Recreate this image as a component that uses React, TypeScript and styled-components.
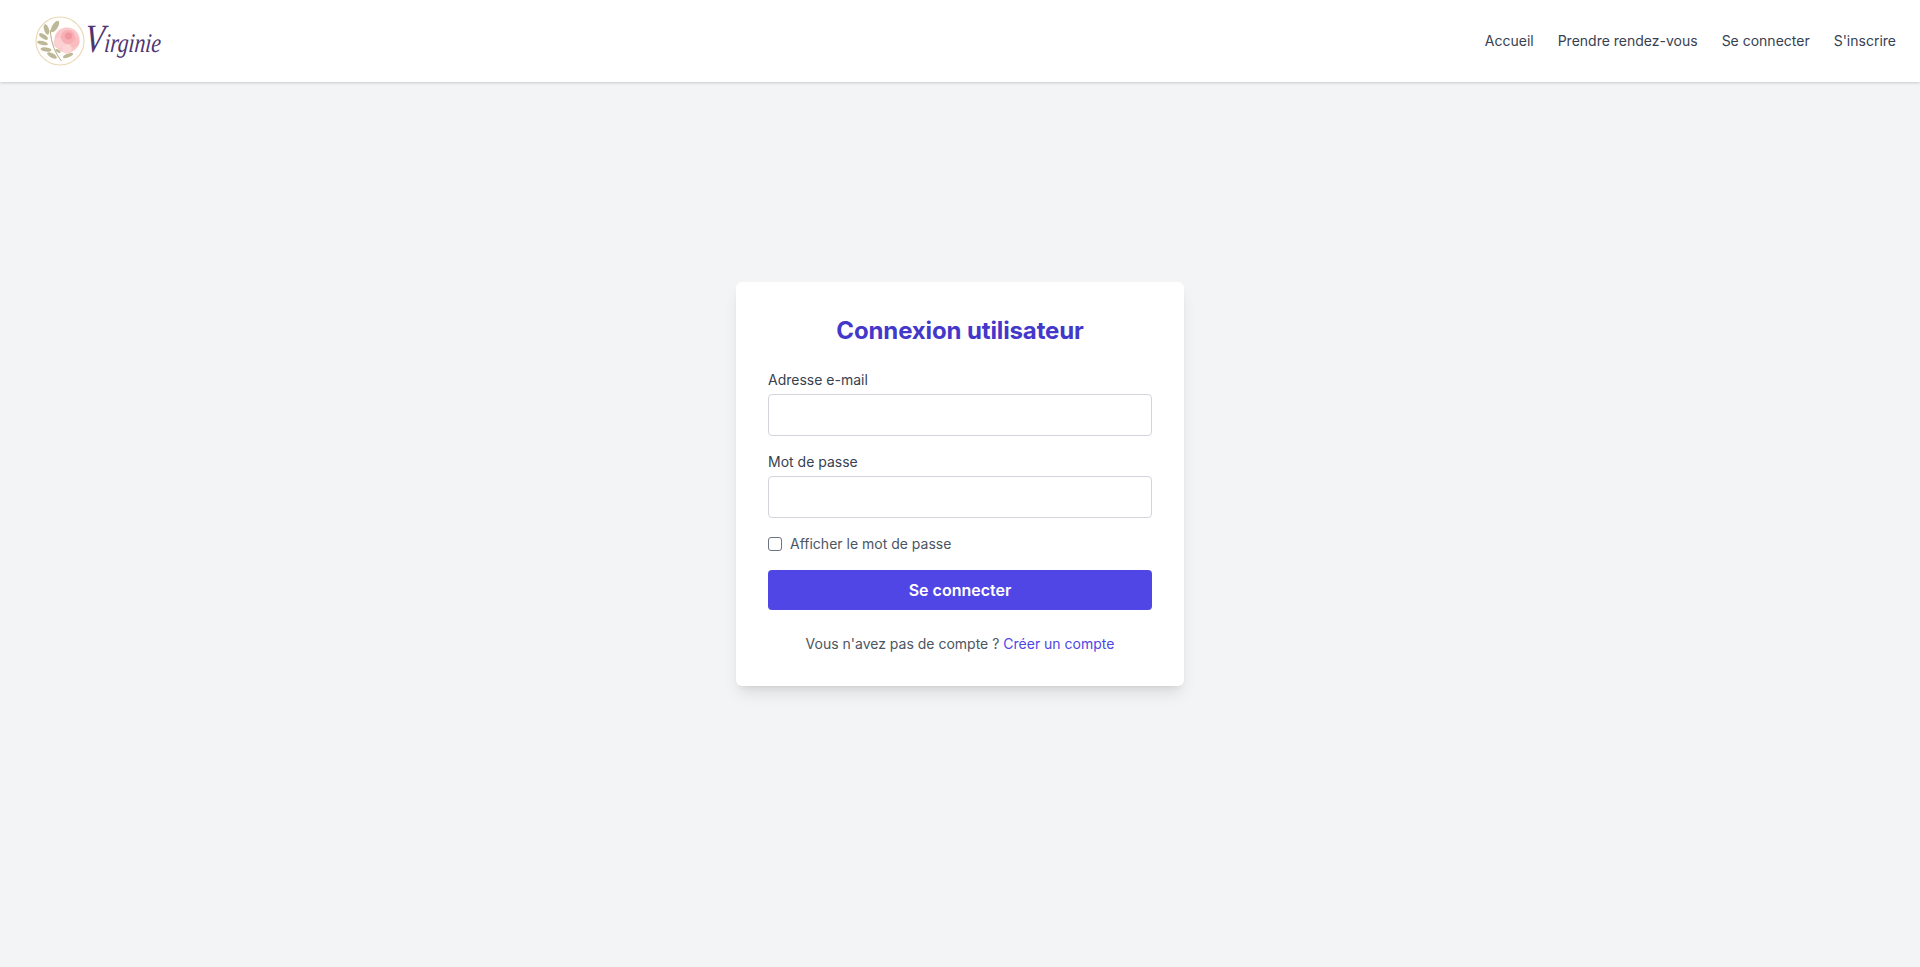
import styled, { createGlobalStyle } from "styled-components";

const GlobalStyle = createGlobalStyle`
    html, body {
        margin: 0;
        padding: 0;
        background-color: #f3f4f6;
        font-family: "Inter", "Liberation Sans", sans-serif;
    }
    * {
        box-sizing: border-box;
    }
`;

const Page = styled.div`
    display: flex;
    flex-direction: column;
    height: 967px;
    overflow: hidden;
    background-color: #f3f4f6;
`;

const Header = styled.header`
    display: flex;
    flex: none;
    justify-content: space-between;
    align-items: center;
    height: 82px;
    padding: 0 24px 0 35px;
    background-color: #fff;
    box-shadow: 0 1px 3px rgba(0, 0, 0, 0.14), 0 1px 2px -1px rgba(0, 0, 0, 0.1);
`;

const Logo = styled.a`
    display: flex;
    align-items: center;
    text-decoration: none;
`;

const LogoName = styled.span`
    display: inline-block;
    width: 74px;
    font-family: "Liberation Serif", serif;
    font-size: 27px;
    font-style: italic;
    line-height: 40px;
    color: #4f3570;
    transform: scaleX(0.8) skewX(-6deg);
    transform-origin: left center;
    white-space: nowrap;

    &::first-letter {
        font-size: 40px;
    }
`;

const Nav = styled.nav`
    display: flex;
    gap: 24px;
`;

const NavLink = styled.a`
    font-size: 14px;
    line-height: 20px;
    color: #374151;
    text-decoration: none;
`;

const Main = styled.main`
    display: flex;
    flex: 1;
    justify-content: center;
    padding-top: 200px;
`;

const Card = styled.section`
    width: 448px;
    height: 404px;
    padding: 32px;
    background-color: #fff;
    border-radius: 6px;
    box-shadow: 0 10px 15px -3px rgba(0, 0, 0, 0.1), 0 4px 6px -4px rgba(0, 0, 0, 0.1);
`;

const Title = styled.h1`
    margin: 0 0 24px;
    padding-top: 1px;
    height: 32px;
    font-size: 24px;
    font-weight: 700;
    line-height: 32px;
    letter-spacing: -0.13px;
    text-align: center;
    color: #4338ca;
`;

const Field = styled.div`
    margin-bottom: 16px;
`;

const Label = styled.label`
    display: block;
    margin-bottom: 4px;
    font-size: 14px;
    line-height: 20px;
    color: #374151;
`;

const Input = styled.input`
    display: block;
    width: 100%;
    height: 42px;
    padding: 8px 12px;
    background-color: #fff;
    border: 1px solid #d1d5db;
    border-radius: 4px;
    outline: none;
`;

const CheckRow = styled.label`
    display: flex;
    align-items: center;
    gap: 8px;
    margin-bottom: 16px;
    font-size: 14px;
    line-height: 20px;
    color: #4b5563;
`;

const CheckBox = styled.input`
    flex: none;
    width: 14px;
    height: 14px;
    margin: 0;
    appearance: none;
    background-color: #fff;
    border: 1px solid #6b7280;
    border-radius: 3px;
`;

const Submit = styled.button`
    display: block;
    width: 100%;
    height: 40px;
    padding: 0;
    font-family: inherit;
    font-size: 16px;
    font-weight: 600;
    color: #fff;
    background-color: #4f46e5;
    border: 0;
    border-radius: 4px;
`;

const Footnote = styled.p`
    margin: 24px 0 0;
    font-size: 14px;
    line-height: 20px;
    text-align: center;
    color: #4b5563;
`;

const FootLink = styled.a`
    color: #4f46e5;
    text-decoration: none;
`;

const navItems = ["Accueil", "Prendre rendez-vous", "Se connecter", "S'inscrire"];

const RoseBadge = () => (
    <svg width="50" height="50" viewBox="0 0 50 50" aria-hidden="true">
        <defs>
            <filter id="soft" x="-20%" y="-20%" width="140%" height="140%">
                <feGaussianBlur stdDeviation="0.45" />
            </filter>
        </defs>
        <circle cx="25" cy="25" r="24" fill="#fffefc" stroke="#e8d8b6" strokeWidth="1.1" />
        <path d="M15.3 14 C16 27 20 37 26.5 45" fill="none" stroke="#a9a581" strokeWidth="0.9" />
        <g fill="#bdb998" filter="url(#soft)">
            <ellipse cx="20" cy="10.5" rx="2.8" ry="6.6" transform="rotate(32 20 10.5)" />
            <ellipse cx="11.5" cy="13.5" rx="2.4" ry="5.4" transform="rotate(-18 11.5 13.5)" />
            <ellipse cx="8.5" cy="20.5" rx="5" ry="2.2" transform="rotate(32 8.5 20.5)" />
            <ellipse cx="7.5" cy="27" rx="5.5" ry="2" transform="rotate(14 7.5 27)" />
            <ellipse cx="11" cy="33.5" rx="5.5" ry="2.1" transform="rotate(8 11 33.5)" />
            <ellipse cx="17" cy="39.5" rx="5.4" ry="2.2" transform="rotate(28 17 39.5)" />
            <ellipse cx="33" cy="39.5" rx="5.4" ry="1.9" transform="rotate(-22 33 39.5)" />
            <ellipse cx="23" cy="35" rx="3" ry="1.4" transform="rotate(30 23 35)" />
        </g>
        <g filter="url(#soft)">
            <circle cx="32" cy="24" r="12.6" fill="#fac6c8" />
            <circle cx="24" cy="27" r="5.6" fill="#fbd0d2" />
            <circle cx="39" cy="26" r="5.4" fill="#f9bdc0" />
            <circle cx="32" cy="33" r="4.8" fill="#fcd6d6" />
            <circle cx="33" cy="21" r="7" fill="#f7aeb4" />
            <circle cx="33.5" cy="20" r="3.6" fill="#f2979f" />
        </g>
    </svg>
);

const App = () => {
    return (
        <>
            <GlobalStyle />
            <Page>
                <Header>
                    <Logo href="#">
                        <RoseBadge />
                        <LogoName>Virginie</LogoName>
                    </Logo>
                    <Nav>
                        {navItems.map((item) => (
                            <NavLink href="#" key={item}>
                                {item}
                            </NavLink>
                        ))}
                    </Nav>
                </Header>
                <Main>
                    <Card>
                        <Title>Connexion utilisateur</Title>
                        <Field>
                            <Label htmlFor="email">Adresse e-mail</Label>
                            <Input id="email" type="email" />
                        </Field>
                        <Field>
                            <Label htmlFor="password">Mot de passe</Label>
                            <Input id="password" type="password" />
                        </Field>
                        <CheckRow>
                            <CheckBox type="checkbox" />
                            Afficher le mot de passe
                        </CheckRow>
                        <Submit type="button">Se connecter</Submit>
                        <Footnote>
                            Vous n'avez pas de compte ? <FootLink href="#">Créer un compte</FootLink>
                        </Footnote>
                    </Card>
                </Main>
            </Page>
        </>
    );
};

export default App;
